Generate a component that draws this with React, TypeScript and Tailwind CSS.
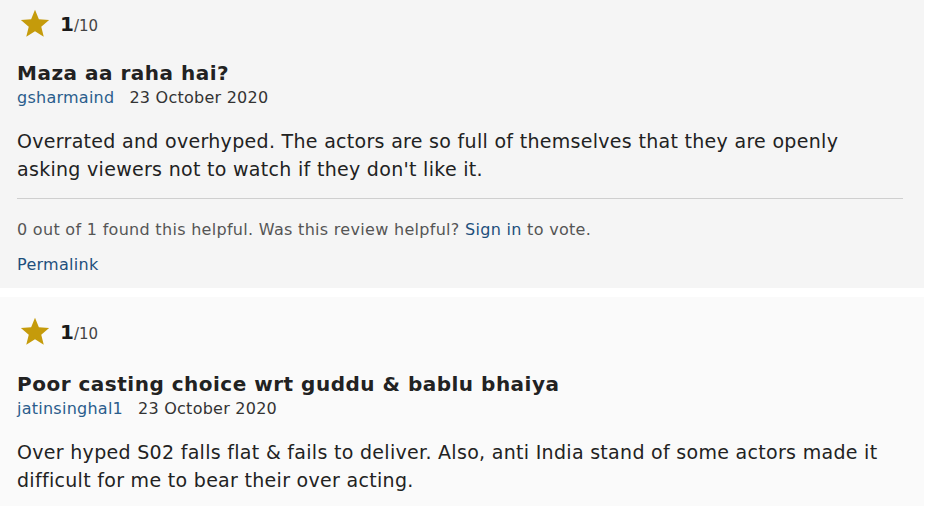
import React from "react";

type Review = {
  rating: number;
  title: string;
  user: string;
  date: string;
  body: string;
  helpful?: string;
  bg: string;
  top: string;
  titleGap: string;
};

const reviews: Review[] = [
  {
    rating: 1,
    title: "Maza aa raha hai?",
    user: "gsharmaind",
    date: "23 October 2020",
    body: "Overrated and overhyped. The actors are so full of themselves that they are openly asking viewers not to watch if they don't like it.",
    helpful: "0 out of 1 found this helpful.",
    bg: "bg-[#f5f5f5]",
    top: "pt-[9px]",
    titleGap: "mt-[23px]",
  },
  {
    rating: 1,
    title: "Poor casting choice wrt guddu & bablu bhaiya",
    user: "jatinsinghal1",
    date: "23 October 2020",
    body: "Over hyped S02 falls flat & fails to deliver. Also, anti India stand of some actors made it difficult for me to bear their over acting.",
    bg: "bg-[#fafafa]",
    top: "pt-[20px]",
    titleGap: "mt-[26px]",
  },
];

const Star = () => (
  <svg width="30" height="29" viewBox="0 0 24 23" className="shrink-0">
    <path
      d="M12 0.5l3.1 7.6 8.2 0.6-6.3 5.3 2 8-7-4.4-7 4.4 2-8L0.7 8.7l8.2-0.6z"
      fill="#c59b0b"
    />
  </svg>
);

const ReviewCard = ({ r }: { r: Review }) => (
  <div className={`${r.bg} ${r.top} w-[924px] pl-[17px] pr-[21px]`}>
    <div className="flex items-center gap-[10px] pl-[3px]">
      <Star />
      <span className="text-[#1a1a1a] leading-none">
        <span className="text-[20px] font-bold">{r.rating}</span>
        <span className="text-[15px] text-[#444]">/10</span>
      </span>
    </div>
    <h2 className={`${r.titleGap} text-[20px] tracking-[0.5px] font-bold text-[#222] leading-[24px]`}>{r.title}</h2>
    <div className="mt-[2px] text-[16px] tracking-[0.25px] leading-[22px] text-[#333]">
      <span className="text-[#2a5d8c]">{r.user}</span>
      <span className="ml-[15px]">{r.date}</span>
    </div>
    <p className="mt-[18px] text-[19px] tracking-[0.3px] leading-[28px] text-[#222]">{r.body}</p>
    {r.helpful && (
      <>
        <div className="mt-[15px] border-t border-[#cfcfcf]" />
        <p className="mt-[21px] text-[16px] tracking-[0.3px] leading-[20px] text-[#555]">
          {r.helpful} Was this review helpful?{" "}
          <span className="text-[#1d4f7c]">Sign in</span> to vote.
        </p>
        <p className="mt-[15px] pb-[13px] text-[16px] tracking-[0.3px] leading-[20px] text-[#1d4f7c]">Permalink</p>
      </>
    )}
    {!r.helpful && <div className="h-[30px]" />}
  </div>
);

export default function App() {
  return (
    <div className="w-[931px] h-[506px] overflow-hidden bg-white font-['DejaVu_Sans',Verdana,sans-serif]">
      <div className="flex flex-col gap-[9px]">
        {reviews.map((r, i) => (
          <ReviewCard key={i} r={r} />
        ))}
      </div>
    </div>
  );
}
